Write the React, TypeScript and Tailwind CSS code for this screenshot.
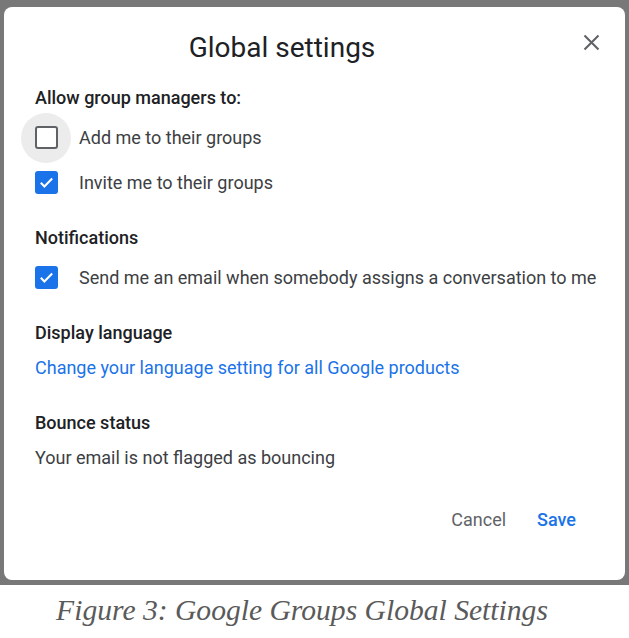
import React, { useState } from "react";

function CheckBox({ checked, halo }: { checked: boolean; halo?: boolean }) {
  return (
    <div
      className={
        "w-[50px] h-[50px] shrink-0 rounded-full flex items-center justify-center " +
        (halo ? "bg-[#ececec]" : "")
      }
    >
      {checked ? (
        <div className="w-[23px] h-[23px] rounded-[3px] bg-[#1a73e8] flex items-center justify-center">
          <svg width="17" height="17" viewBox="0 0 24 24" fill="none">
            <path d="M4 12.5l5 5L20 6.5" stroke="#fff" strokeWidth="3" />
          </svg>
        </div>
      ) : (
        <div className="w-[23px] h-[23px] rounded-[3px] border-[2.5px] border-[#5f6368] bg-white" />
      )}
    </div>
  );
}

function Row({ label, checked, halo }: { label: string; checked: boolean; halo?: boolean }) {
  return (
    <div className="h-[45px] -ml-[14px] flex items-center gap-[8px]">
      <CheckBox checked={checked} halo={halo} />
      <span className="text-[18px] leading-[24px] text-[#3c4043] whitespace-nowrap">{label}</span>
    </div>
  );
}

export default function App() {
  const [open] = useState(true);

  return (
    <div className="w-[629px] h-[638px] bg-white flex flex-col" style={{ fontFamily: "Roboto, 'Liberation Sans', sans-serif" }}>
      <div className="h-[585px] bg-[#787878] pt-[7px] pl-[4px] pr-[4px]">
        {open && (
          <div className="w-[621px] h-[573px] bg-white rounded-[8px] flex flex-col">
            {/* header */}
            <div className="flex items-center pt-[23px] pl-[31px] pr-[10px]">
              <h1 className="flex-1 text-center text-[28px] leading-[36px] text-[#202124] font-normal">
                Global settings
              </h1>
              <button className="w-12 h-9 ml-[38px] -mt-[12px] flex items-center justify-center">
                <svg width="21" height="21" viewBox="0 0 24 24">
                  <path d="M4 4l16 16M20 4L4 20" stroke="#5f6368" strokeWidth="2.4" />
                </svg>
              </button>
            </div>

            <div className="px-[31px] flex flex-col">
              <div className="mt-[20px] text-[18px] leading-[24px] font-medium text-[#202124]">
                Allow group managers to:
              </div>
              <div className="mt-[5px]">
                <Row label="Add me to their groups" checked={false} halo />
                <Row label="Invite me to their groups" checked />
              </div>

              <div className="mt-[21px] text-[18px] leading-[24px] font-medium text-[#202124]">
                Notifications
              </div>
              <div className="mt-[5px]">
                <Row label="Send me an email when somebody assigns a conversation to me" checked />
              </div>

              <div className="mt-[21px] text-[18px] leading-[24px] font-medium text-[#202124]">
                Display language
              </div>
              <a className="mt-[11px] text-[18px] leading-[24px] text-[#1a73e8]">
                Change your language setting for all Google products
              </a>

              <div className="mt-[31px] text-[18px] leading-[24px] font-medium text-[#202124]">
                Bounce status
              </div>
              <div className="mt-[11px] text-[18px] leading-[24px] text-[#3c4043]">
                Your email is not flagged as bouncing
              </div>
            </div>

            {/* actions */}
            <div className="mt-[31px] flex justify-end items-center gap-[11px] pr-[39px]">
              <button className="h-9 px-[10px] text-[18px] text-[#5f6368]">Cancel</button>
              <button className="h-9 px-[10px] text-[18px] font-medium text-[#1a73e8]">Save</button>
            </div>
          </div>
        )}
      </div>

      <div className="flex-1 flex items-center justify-center pr-[25px] pb-[4px]">
        <p
          className="italic text-[29.6px] leading-[36px] text-[#5a5a5a]"
          style={{ fontFamily: "'Liberation Serif', serif" }}
        >
          Figure 3: Google Groups Global Settings
        </p>
      </div>
    </div>
  );
}
